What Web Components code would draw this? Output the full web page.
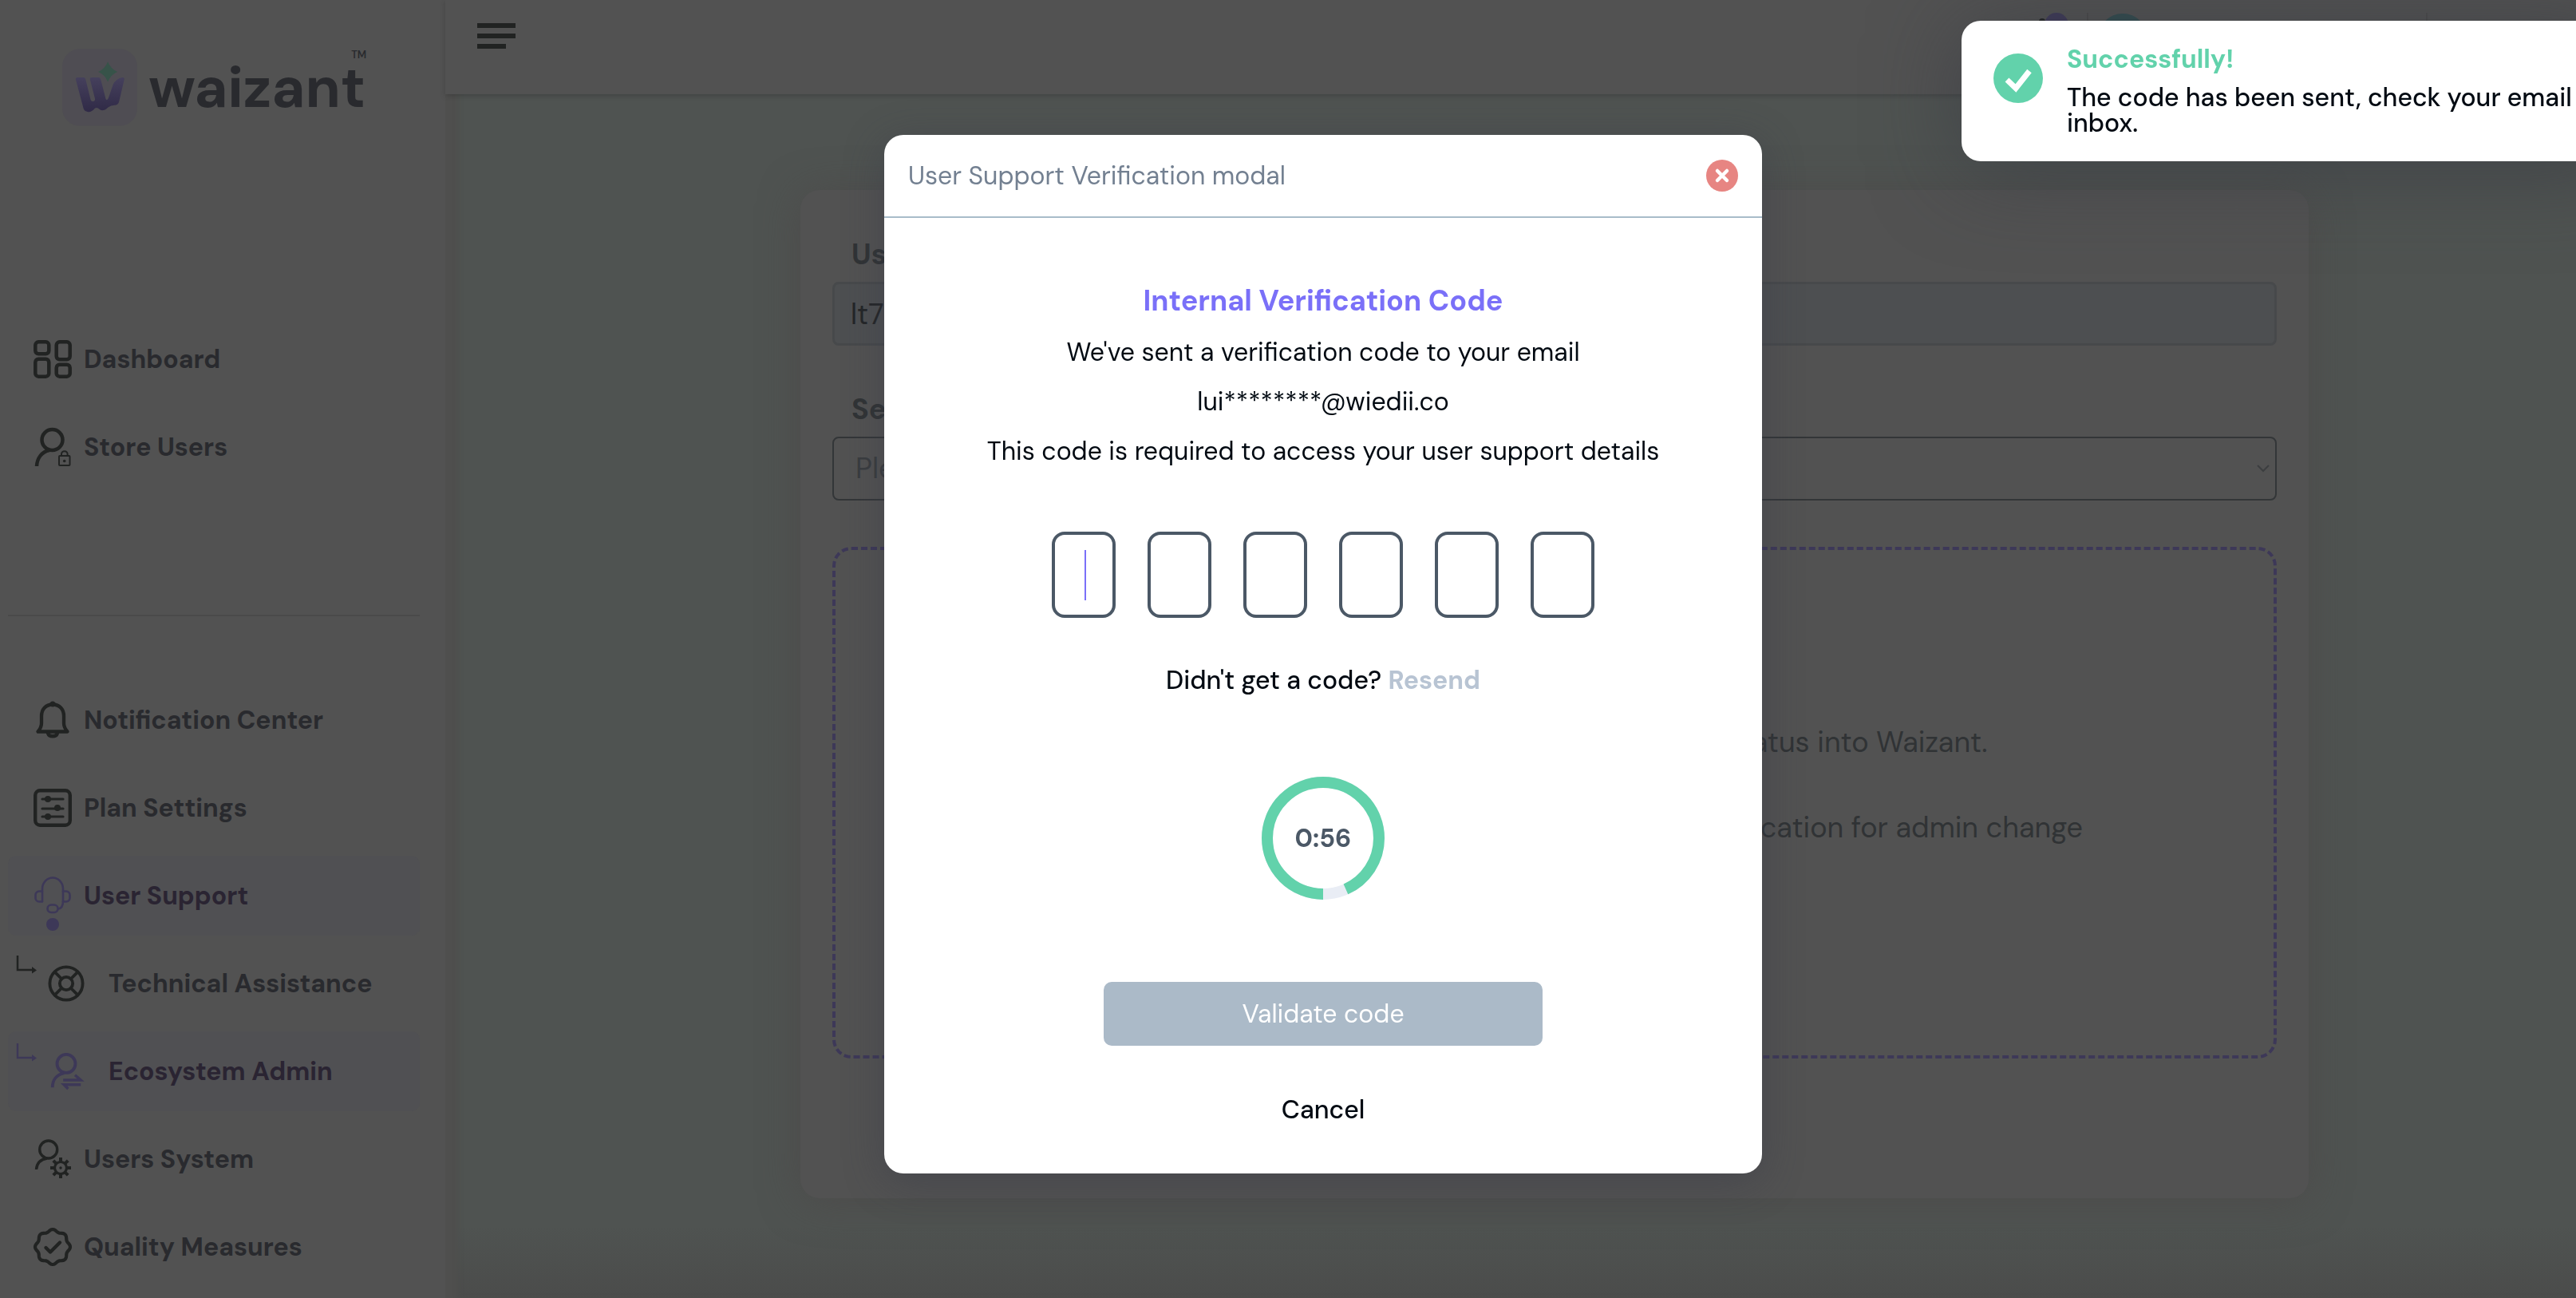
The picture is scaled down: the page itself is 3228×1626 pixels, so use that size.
<!DOCTYPE html>
<html lang="en">
<head>
<meta charset="utf-8">
<title>Waizant</title>
<style>
  :root {
    --ink: #292a2e;
    --icon: #212322;
    --surface: #525252;
    --page: #4f5351;
    --active: #3d3858;
    --text: #020a12;
    --slate: #4b5866;
    --green: #62d2ab;
    --violet: #7a70f8;
  }
  html, body { margin: 0; height: 100%; overflow: hidden; }
  body { font-family: "DM Sans", Inter, "Liberation Sans", sans-serif; font-size: 32px; line-height: 40px; color: var(--ink); background: var(--page); }
</style>
</head>
<body>
<wz-app></wz-app>
<script>
const define = (name, html, setup) => {
  const tpl = document.createElement('template');
  tpl.innerHTML = '<style>*{box-sizing:border-box}</style>' + html;
  customElements.define(name, class extends HTMLElement {
    constructor() {
      super();
      this.attachShadow({ mode: 'open' }).append(tpl.content.cloneNode(true));
    }
    connectedCallback() { if (setup) setup(this, this.shadowRoot); }
  });
};

/* wavy eight-lobed badge outline */
const badge = (() => {
  let d = '';
  for (let i = 0; i < 96; i++) {
    const a = i / 96 * Math.PI * 2, r = 20.6 + 1.4 * Math.cos(8 * a);
    d += (i ? 'L' : 'M') + (24 + r * Math.sin(a)).toFixed(2) + ' ' + (24 - r * Math.cos(a)).toFixed(2);
  }
  return d + 'Z';
})();

const gearTeeth = [0, 45, 90, 135, 180, 225, 270, 315]
  .map(a => `<path d="M34 27V22" transform="rotate(${a} 34 35)" stroke-width="4" stroke-linecap="butt"/>`).join('');

const ICONS = {
  dashboard: '<g stroke-width="4.5"><rect x="2.3" y="2.3" width="17" height="15" rx="4"/><rect x="28.7" y="2.3" width="17" height="22" rx="4"/><rect x="2.3" y="23.7" width="17" height="22" rx="4"/><rect x="28.7" y="30.7" width="17" height="15" rx="4"/></g>',
  userlock: '<g stroke-width="4.5"><circle cx="23.5" cy="15" r="13"/><path d="M4 48C4.500 38 10 30 20 28" stroke-linecap="butt"/></g><g stroke-width="2"><rect x="32" y="35" width="13.500" height="12" rx="1"/><path d="M35 35V33a3.800 3.800 0 0 1 7.600 0V35"/></g><circle cx="38.700" cy="41.500" r="1.800" fill="currentColor" stroke="none"/>',
  bell: '<g stroke-width="4.300"><path d="M24 4.500C15 4.500 10 11 10 19V28C10 32 8.500 35 5.500 38.500H42.500C39.500 35 38 32 38 28V19C38 11 33 4.500 24 4.500Z"/><path d="M18 40.500a6.200 5 0 0 0 12 0"/></g><circle cx="24" cy="4" r="3.500" fill="currentColor" stroke="none"/>',
  plan: '<rect x="2.200" y="2.200" width="43.600" height="43.600" rx="6" stroke-width="4.400"/><g stroke-width="3.200"><path d="M11 13H37M11 25H37M11 35H37"/></g><g fill="currentColor" stroke="none"><circle cx="18" cy="13" r="4"/><circle cx="30" cy="24" r="4"/><circle cx="18" cy="35" r="4"/></g>',
  headset: '<g stroke-width="2.600"><path d="M11 31V15.500a13 14 0 0 1 26 0V31"/><path d="M11 18.500H7a4.500 4.500 0 0 0-4.500 4.500v4a4.500 4.500 0 0 0 4.500 4.500h4M37 18.500h4a4.500 4.500 0 0 1 4.500 4.500v4a4.500 4.500 0 0 1-4.500 4.500H37"/><path d="M37 31c0 5-2 9-6 9.500"/><rect x="17.500" y="35.500" width="13" height="9.500" rx="4.700"/></g>',
  lifebuoy: '<g stroke-width="4"><circle cx="24" cy="24" r="21.500"/><circle cx="24" cy="24" r="8.500"/><path d="M9 9l9 9M39 9l-9 9M9 39l9-9M39 39l-9-9"/></g>',
  useradmin: '<g stroke-width="4"><circle cx="24" cy="14" r="12"/><path d="M6 45C6 36 11 28.500 21 26.500" stroke-linecap="butt"/></g><g stroke-width="3.600" stroke-linecap="butt" stroke-linejoin="miter"><path d="M20 35.500H43L35.500 29"/><path d="M43 41.500H21L26.500 47"/></g>',
  usergear: '<g stroke-width="3.400"><circle cx="18.700" cy="12" r="11"/><path d="M3.500 37C4 30 8 24.500 17 23" stroke-linecap="butt"/></g><circle cx="34" cy="35" r="7.500" stroke-width="3.200"/><circle cx="34" cy="35" r="1.700" fill="currentColor" stroke="none"/>' + gearTeeth,
  quality: `<path d="${badge}" stroke-width="4.200"/><path d="M15.500 25l5.500 5.500L33 18.500" stroke-width="4.400"/>`
};

define('wz-icon', `
  <style>:host{display:block;width:48px;height:48px;flex:none} svg{display:block;width:100%;height:100%;overflow:visible}</style>
  <svg viewBox="0 0 48 48" fill="none" stroke="currentColor" stroke-linecap="round" stroke-linejoin="round" aria-hidden="true"></svg>`,
  (el, root) => { root.querySelector('svg').innerHTML = ICONS[el.getAttribute('name')]; });

define('wz-logo', `
  <style>
    :host{display:flex;align-items:center;gap:14px}
    svg{width:94px;height:97px;flex:none}
    .word{font-size:72px;line-height:80px;font-weight:700}
    .tm{font-size:13px;line-height:16px;font-weight:600;align-self:flex-start;margin-left:-32px}
  </style>
  <svg viewBox="24 34 283 290" aria-hidden="true">
    <defs><linearGradient id="g" x1="0" y1="0" x2="0" y2="1"><stop offset="0" stop-color="#45405c"/><stop offset="1" stop-color="#302a47"/></linearGradient></defs>
    <rect x="24" y="34" width="283" height="290" rx="66" fill="#4f4d53"/>
    <path fill="url(#g)" d="M75 149Q73 141 82 141H103Q110 141 112 148L131 225Q134 234 143 231Q149 229 147 220L129 150Q127 141 136 141H160Q167 141 169 148L188 222Q192 231 198 220L216 168Q226 145 252 141Q259 141 258 149L238 234Q234 246 222 246Q207 246 197 254Q178 272 165 262Q155 252 147 258Q132 276 117 270Q107 268 104 258Z"/>
    <path fill="#375349" d="M196 82Q206 109 232 120Q206 131 196 158Q186 131 160 120Q186 109 196 82Z"/>
  </svg>
  <span class="word">waizant</span><span class="tm">TM</span>`);

define('wz-nav-item', `
  <style>
    :host{display:block}
    a{position:relative;display:flex;align-items:center;height:100px;padding-left:32px;border-radius:10px;color:var(--ink);text-decoration:none;font-weight:700;white-space:nowrap}
    wz-icon{color:var(--icon)}
    .label{margin-left:15px}
    .arrow{display:none;width:26px;height:24px;align-self:flex-start;margin:14px 14px 0 0;color:var(--icon)}
    .dot{display:none;position:absolute;left:48px;bottom:6px;width:16px;height:16px;border-radius:50%;background:var(--active)}
    :host([active]) a{background:#505053;color:#2a2432}
    :host([active]) wz-icon,:host([active]) .arrow{color:var(--active)}
    :host([dot]) .dot{display:block}
    :host([sub]) a{padding-left:10px}
    :host([sub]) .arrow{display:block}
    :host([sub]) wz-icon{width:46px;height:46px}
    :host([sub]) .label{margin-left:30px}
  </style>
  <a href="#">
    <svg class="arrow" viewBox="0 0 26 24" aria-hidden="true"><path d="M2 1V19H21" fill="none" stroke="currentColor" stroke-width="2.500"/><path d="M20 15l6 4.500-6 4z" fill="currentColor"/></svg>
    <wz-icon></wz-icon><span class="label"><slot></slot></span><span class="dot"></span>
  </a>`,
  (el, root) => {
    const icon = document.createElement('wz-icon');
    icon.setAttribute('name', el.getAttribute('icon'));
    root.querySelector('wz-icon').replaceWith(icon);
  });

define('wz-sidebar', `
  <style>
    :host{display:block;height:100vh;overflow:hidden;background:var(--surface);padding:61px 32px 0 10px}
    wz-logo{margin-left:68px;height:97px}
    nav{display:flex;flex-direction:column;gap:10px}
    .main{margin-top:242px}
    hr{border:0;border-top:2px solid #4a4a4a;margin:160px 0 80px}
  </style>
  <wz-logo></wz-logo>
  <nav class="main" aria-label="Main">
    <wz-nav-item icon="dashboard">Dashboard</wz-nav-item>
    <wz-nav-item icon="userlock">Store Users</wz-nav-item>
  </nav>
  <hr>
  <nav aria-label="Settings">
    <wz-nav-item icon="bell">Notification Center</wz-nav-item>
    <wz-nav-item icon="plan">Plan Settings</wz-nav-item>
    <wz-nav-item icon="headset" active dot>User Support</wz-nav-item>
    <wz-nav-item icon="lifebuoy" sub>Technical Assistance</wz-nav-item>
    <wz-nav-item icon="useradmin" sub active>Ecosystem Admin</wz-nav-item>
    <wz-nav-item icon="usergear">Users System</wz-nav-item>
    <wz-nav-item icon="quality">Quality Measures</wz-nav-item>
  </nav>`);

define('wz-topbar', `
  <style>
    :host{display:flex;justify-content:space-between;align-items:flex-start;height:118px;padding:16px 186px 0 40px;background:var(--surface);box-shadow:0 2px 6px rgba(40,40,40,.35)}
    button{border:0;background:none;padding:0;display:block}
    .menu{width:48px;height:32px;margin-top:13px}
    .tools{display:flex;align-items:flex-start}
    .tools i{width:2px;height:64px;background:#4a4a4a}
    .bell{width:62px;height:62px}
    .avatar{width:62px;height:62px;border-radius:50%;background:#304b4e;margin:1px 349px 0 12px}
    svg{display:block}
  </style>
  <button class="menu" aria-label="Menu"><svg width="48" height="32" fill="#212322"><rect width="48" height="6"/><rect y="13" width="48" height="6"/><rect y="26" width="36" height="6"/></svg></button>
  <div class="tools">
    <button class="bell" aria-label="Notifications"><svg width="62" height="62" viewBox="0 0 62 62"><path d="M2 50V28a16 16 0 0 1 32 0v22z" fill="none" stroke="#212322" stroke-width="4"/><circle cx="6" cy="11" r="4" fill="#212322"/><circle cx="24" cy="15" r="15" fill="#3d3858"/><path d="M17 14a4 5 0 0 1 7 0M26 14a4 5 0 0 1 7 0" fill="none" stroke="#525252" stroke-width="3"/></svg></button>
    <i></i><span class="avatar"></span><i></i>
  </div>`);

define('wz-support-form', `
  <style>
    :host{display:block;background:var(--surface);border-radius:24px;padding:57px 40px 175px;box-shadow:0 4px 50px rgba(75,70,70,.6)}
    label{display:block;margin:0 0 10px 24px;font-size:36px;line-height:48px;font-weight:700;color:#303335}
    input,select{display:block;width:100%;height:80px;border-radius:8px;font:400 36px/44px "DM Sans",Inter,sans-serif;margin:0;outline:0}
    input{padding:0 20px;border:3px solid #47494b;background:#4d4f51;color:#232527;margin-bottom:56px}
    .select{position:relative;margin-bottom:58px}
    select{appearance:none;padding:0 27px;border:2px solid #333638;background:transparent;color:#393c3f}
    .select svg{position:absolute;right:9px;top:35px;pointer-events:none}
    .zone{min-height:641px;border:4px dashed var(--active);border-radius:24px;padding-top:214px;text-align:center;color:#303335}
    p{margin:0 0 53px;font-size:36px;line-height:54px;white-space:nowrap}
  </style>
  <label for="user">User ID</label>
  <input id="user" value="lt7" readonly>
  <label for="service">Service</label>
  <div class="select"><select id="service"><option>Please select</option></select>
    <svg width="16" height="10" fill="none" stroke="#3c3e40" stroke-width="2" aria-hidden="true"><path d="M1 1l7 7 7-7"/></svg></div>
  <div class="zone">
    <p>In this section you can check and update the status into Waizant.</p>
    <p>Please select one of the options above to get new verification for admin change</p>
  </div>`);

define('wz-countdown', `
  <style>
    :host{display:grid;width:154px;height:154px;place-items:center}
    svg,span{grid-area:1/1}
    span{font-weight:700;color:var(--slate)}
  </style>
  <svg width="154" height="154" viewBox="0 0 154 154" fill="none" stroke-width="14" aria-hidden="true">
    <circle cx="77" cy="77" r="70" stroke="#e9edf5"/>
    <circle cx="77" cy="77" r="70" stroke="#62d2ab" pathLength="360" stroke-dasharray="336 24" transform="rotate(90 77 77)"/>
  </svg>
  <span><slot></slot></span>`);

define('wz-code-input', `
  <style>
    :host{display:flex;gap:40px}
    input{width:80px;height:108px;margin:0;padding:0;border:4px solid var(--slate);border-radius:16px;background:#fff;text-align:center;font:500 40px "DM Sans",Inter,sans-serif;caret-color:var(--violet);outline:0}
    input:first-of-type{background:linear-gradient(var(--violet),var(--violet)) 37px center/2px 63px no-repeat #fff}
  </style>
  <input maxlength="1" inputmode="numeric" aria-label="Digit 1">
  <input maxlength="1" inputmode="numeric" aria-label="Digit 2">
  <input maxlength="1" inputmode="numeric" aria-label="Digit 3">
  <input maxlength="1" inputmode="numeric" aria-label="Digit 4">
  <input maxlength="1" inputmode="numeric" aria-label="Digit 5">
  <input maxlength="1" inputmode="numeric" aria-label="Digit 6">`);

define('wz-verify-modal', `
  <style>
    :host{display:block;width:1100px;background:#fff;border-radius:24px;color:var(--text);box-shadow:0 10px 50px rgba(55,58,70,.45)}
    header{display:flex;justify-content:space-between;align-items:center;height:104px;padding:0 30px;border-bottom:2px solid #a8bcc9;color:#738091}
    h2,h3,p{margin:0;font-size:32px;font-weight:400}
    button{border:0;background:none;padding:0;margin:0;font:inherit;color:inherit;display:block}
    .body{display:flex;flex-direction:column;align-items:center;padding:82px 0 60px}
    h3{font-size:36px;line-height:44px;font-weight:700;color:var(--violet);margin-bottom:11px}
    .body p{line-height:62px}
    wz-code-input{margin-top:70px}
    .body .again{line-height:40px;font-weight:500;margin:58px 0 101px}
    .again button{display:inline;font-weight:700;color:#b8c4d3}
    .go{width:50%;height:80px;margin:103px 0 60px;border-radius:10px;background:#abbac8;color:#fff}
    .cancel{font-weight:500}
    svg{display:block}
  </style>
  <header><h2>User Support Verification modal</h2>
    <button aria-label="Close"><svg width="40" height="40" viewBox="0 0 40 40"><circle cx="20" cy="20" r="20" fill="#e78582"/><path d="M14 14l12 12M26 14L14 26" stroke="#fff" stroke-width="4.500" stroke-linecap="round"/></svg></button>
  </header>
  <div class="body">
    <h3>Internal Verification Code</h3>
    <p>We've sent a verification code to your email</p>
    <p>lui********@wiedii.co</p>
    <p>This code is required to access your user support details</p>
    <wz-code-input></wz-code-input>
    <p class="again">Didn't get a code? <button>Resend</button></p>
    <wz-countdown>0:56</wz-countdown>
    <button class="go">Validate code</button>
    <button class="cancel">Cancel</button>
  </div>`);

define('wz-toast', `
  <style>
    :host{display:flex;gap:30px;width:832px;padding:28px 40px 32px;border-radius:24px;background:#fff;color:var(--text);box-shadow:0 10px 110px rgba(55,58,66,.65)}
    svg{flex:none;margin-top:13px}
    strong{display:block;color:var(--green);font-weight:700;margin-bottom:12px}
    p{margin:0;font-weight:500;line-height:32px}
  </style>
  <svg width="62" height="62" viewBox="0 0 62 62" aria-hidden="true"><circle cx="31" cy="31" r="31" fill="#62d2ab"/><path d="M17 33l11 10.500L45 22" fill="none" stroke="#fff" stroke-width="7"/></svg>
  <div role="status"><strong><slot name="title"></slot></strong><p><slot></slot></p></div>`);

define('wz-app', `
  <style>
    :host{display:grid;grid-template-columns:558px 1fr;height:100vh;overflow:hidden}
    .page{display:flex;flex-direction:column;min-width:0;background:linear-gradient(transparent calc(100% - 90px),#4b4c4b),var(--page);box-shadow:inset 18px 0 6px -2px #4f4f4e}
    main{padding:120px 335px 0 445px}
    .overlay{position:fixed;inset:0 -88px 0 0;display:flex;justify-content:center;align-items:flex-start;padding-top:169px}
    wz-toast{position:fixed;top:26px;right:-62px}
  </style>
  <wz-sidebar></wz-sidebar>
  <div class="page">
    <wz-topbar></wz-topbar>
    <main><wz-support-form></wz-support-form></main>
  </div>
  <div class="overlay"><wz-verify-modal role="dialog" aria-modal="true"></wz-verify-modal></div>
  <wz-toast><span slot="title">Successfully!</span>The code has been sent, check your email inbox.</wz-toast>`);
</script>
</body>
</html>
